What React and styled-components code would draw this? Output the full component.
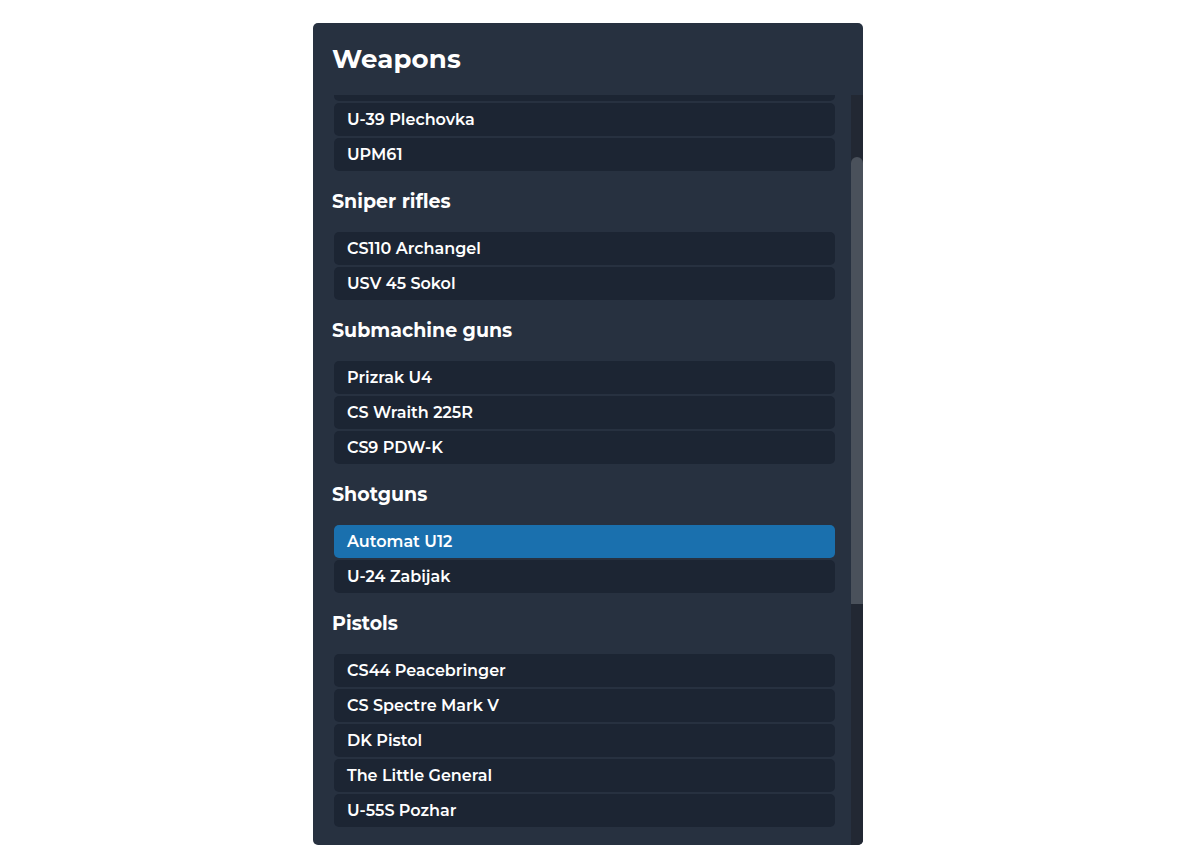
import React, {useLayoutEffect, useRef} from "react";
import styled, {createGlobalStyle} from "styled-components";

const GlobalStyle = createGlobalStyle`
  *, *::before, *::after {
    box-sizing: border-box;
  }
  html, body {
    margin: 0;
    padding: 0;
    background: #ffffff;
    font-family: "Montserrat", "DejaVu Sans", "Noto Sans", sans-serif;
  }
`;

const Page = styled.div`
  display: flex;
  justify-content: flex-start;
  padding: 23px 0 0 313px;
`;

const Panel = styled.section`
  width: 550px;
  height: 822px;
  background: #273140;
  border-radius: 5px;
  display: flex;
  flex-direction: column;
  overflow: hidden;
`;

const Title = styled.h1`
  margin: 0;
  height: 72px;
  flex: none;
  display: flex;
  align-items: center;
  padding: 0 19px;
  color: #ffffff;
  font-size: 26px;
  font-weight: 700;
  letter-spacing: 0.2px;
`;

const Body = styled.div`
  flex: 1;
  min-height: 0;
  display: flex;
`;

const Scroller = styled.div`
  flex: 1;
  overflow: hidden;
  padding: 0 16px 19px 21px;
`;

const Track = styled.div`
  width: 12px;
  flex: none;
  background: #222833;
  display: flex;
  flex-direction: column;
  padding-top: 62px;
`;

const Thumb = styled.div`
  height: 447px;
  background: #4a515b;
  border-radius: 6px 6px 0 0;
`;

const Group = styled.div`
  display: flex;
  flex-direction: column;
  gap: 2px;
`;

const GroupTitle = styled.h2`
  margin: 20px 0 19px -2px;
  height: 22px;
  line-height: 22px;
  color: #ffffff;
  font-size: 19px;
  font-weight: 700;
`;

const Item = styled.div`
  height: 33px;
  display: flex;
  align-items: center;
  padding: 0 13px;
  border-radius: 5px;
  background: ${p => (p.$active ? "#1a70ae" : "#1c2533")};
  color: #ffffff;
  font-size: 16px;
  font-weight: 600;
  cursor: pointer;
`;

const groups = [
    {name: "Assault rifles", items: ["CS Grey 32", "Sernal Karabina", "U-39 Plechovka", "UPM61"]},
    {name: "Sniper rifles", items: ["CS110 Archangel", "USV 45 Sokol"]},
    {name: "Submachine guns", items: ["Prizrak U4", "CS Wraith 225R", "CS9 PDW-K"]},
    {name: "Shotguns", items: ["Automat U12", "U-24 Zabijak"]},
    {name: "Pistols", items: ["CS44 Peacebringer", "CS Spectre Mark V", "DK Pistol", "The Little General", "U-55S Pozhar"]},
    {name: "Heavy weapons", items: ["Lastochka MG", "CS Titan LMG", "U-90 Grom", "Moloch"]},
    {name: "Melee", items: ["Combat Knife", "Machete", "Baton", "Fire Axe"]},
];

const App = () => {
    const scroller = useRef(null);
    const anchor = useRef(null);

    useLayoutEffect(() => {
        const box = scroller.current;
        const item = anchor.current;
        if (box && item) {
            const offset = item.getBoundingClientRect().top - box.getBoundingClientRect().top;
            box.scrollTop = box.scrollTop + offset - 8;
        }
    }, []);

    return (
        <>
            <GlobalStyle/>
            <Page>
                <Panel>
                    <Title>Weapons</Title>
                    <Body>
                        <Scroller ref={scroller}>
                            {groups.map(group => (
                                <div key={group.name}>
                                    <GroupTitle>{group.name}</GroupTitle>
                                    <Group>
                                        {group.items.map(item => (
                                            <Item
                                                key={item}
                                                ref={item === "U-39 Plechovka" ? anchor : null}
                                                $active={item === "Automat U12"}
                                            >
                                                {item}
                                            </Item>
                                        ))}
                                    </Group>
                                </div>
                            ))}
                        </Scroller>
                        <Track>
                            <Thumb/>
                        </Track>
                    </Body>
                </Panel>
            </Page>
        </>
    );
};

export default App;
